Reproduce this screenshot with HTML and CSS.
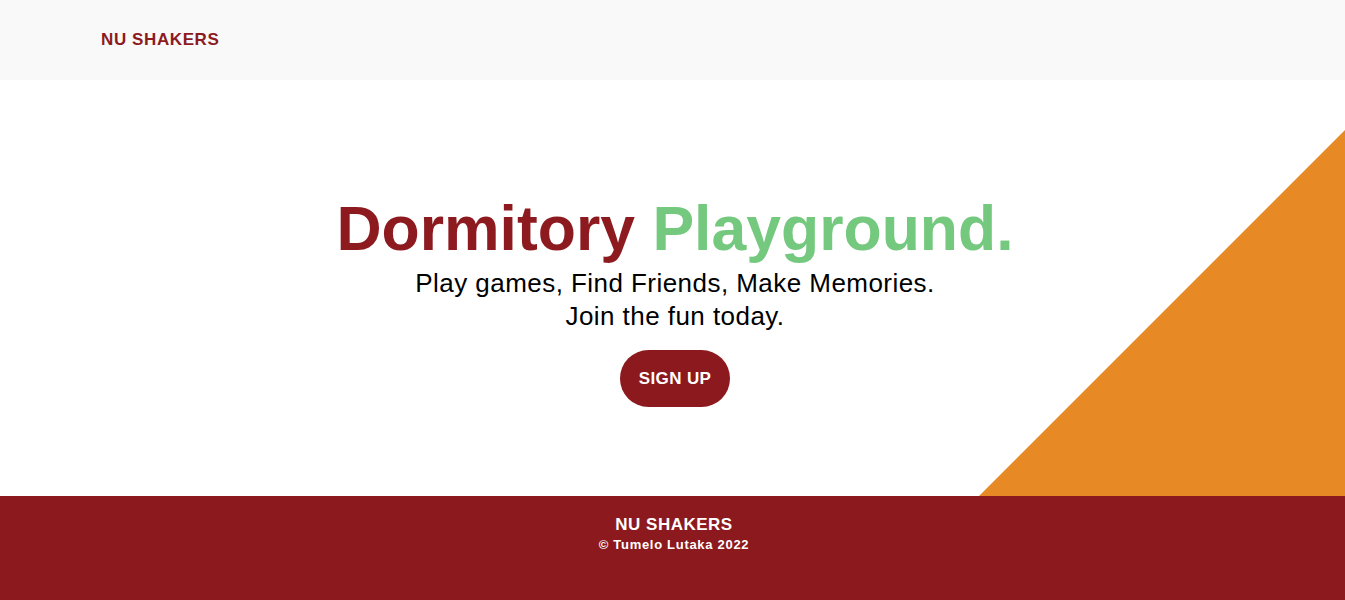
FILE: index.html
```html
<!DOCTYPE html>
<html lang="en">
<head>
<meta charset="utf-8">
<title>NU Shakers</title>
<link rel="stylesheet" href="styles.css">
</head>
<body>
<header class="topbar">
  <a class="brand" href="#">NU SHAKERS</a>
</header>
<main class="hero">
  <div class="hero-deco"></div>
  <div class="hero-content">
    <h1 class="title"><span class="title-a">Dormitory</span> <span class="title-b">Playground.</span></h1>
    <p class="lead">Play games, Find Friends, Make Memories.<br>Join the fun today.</p>
    <a class="btn" href="#">SIGN UP</a>
  </div>
</main>
<footer class="footer">
  <div class="footer-brand">NU SHAKERS</div>
  <div class="footer-copy">© Tumelo Lutaka 2022</div>
</footer>
</body>
</html>
```
FILE: styles.css
```css
* { box-sizing: border-box; }
html, body { margin: 0; padding: 0; }
body {
  font-family: "Liberation Sans", Arial, sans-serif;
  background: #fff;
  color: #000;
}
.topbar {
  height: 80px;
  background: #f9f9f9;
  display: flex;
  align-items: center;
  padding-left: 101px;
}
.brand {
  color: #8c1a1f;
  font-weight: bold;
  font-size: 17px;
  letter-spacing: 0.6px;
  text-decoration: none;
}
.hero {
  position: relative;
  height: 416px;
  display: flex;
  justify-content: center;
  padding-left: 5px;
  overflow: hidden;
}
.hero-deco {
  position: absolute;
  right: 0;
  bottom: 0;
  width: 0;
  height: 0;
  border-style: solid;
  border-width: 0 0 366px 366px;
  border-color: transparent transparent #e78925 transparent;
}
.hero-content {
  position: relative;
  display: flex;
  flex-direction: column;
  align-items: center;
  padding-top: 111px;
  text-align: center;
}
.title {
  margin: 0;
  font-size: 62.5px;
  line-height: 74px;
  font-weight: bold;
}
.title-a { color: #8c1a1f; }
.title-b { color: #74c97e; }
.lead {
  margin: 2px 0 0;
  font-size: 26px;
  letter-spacing: 0.45px;
  line-height: 33px;
}
.btn {
  margin-top: 17px;
  display: flex;
  align-items: center;
  justify-content: center;
  width: 110px;
  height: 57px;
  border-radius: 29px;
  background: #8c191d;
  color: #fff;
  font-weight: bold;
  font-size: 17px;
  letter-spacing: 0.4px;
  text-decoration: none;
}
.footer {
  height: 104px;
  background: #8c191d;
  color: #fff;
  display: flex;
  flex-direction: column;
  align-items: center;
  padding-top: 18px;
  padding-left: 3px;
  font-weight: bold;
}
.footer-brand {
  font-size: 17px;
  letter-spacing: 0.5px;
  line-height: 21px;
}
.footer-copy {
  font-size: 13px;
  letter-spacing: 0.7px;
  line-height: 19px;
}
```
